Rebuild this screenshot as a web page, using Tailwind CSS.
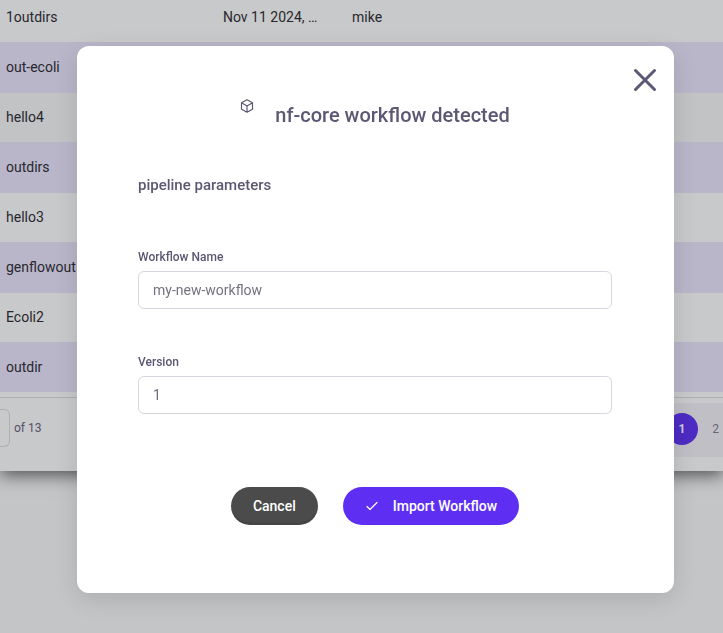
<!DOCTYPE html>
<html lang="en">
<head>
<meta charset="utf-8">
<title>Import workflow</title>
<script src="https://cdn.jsdelivr.net/npm/@tailwindcss/browser@4"></script>
</head>
<body class="min-h-screen overflow-hidden bg-[#c4c5c7] font-[Roboto,sans-serif] text-sm text-[#28272e]">
<main class="-mt-2 bg-[#c8c9ca] shadow-[0_4px_16px_rgba(0,0,0,0.6)]">
  <table class="w-full table-fixed border-collapse text-left">
    <colgroup><col class="w-[217px]"><col class="w-[129px]"><col></colgroup>
    <tbody>
      <tr class="h-[50px]"><td class="px-1.5">1outdirs</td><td class="px-1.5">Nov 11 2024, …</td><td class="px-1.5">mike</td></tr>
      <tr class="h-[51px] bg-[#b9b6ca]"><td class="px-1.5 pb-0.5">out-ecoli</td><td></td><td></td></tr>
      <tr class="h-[49px] bg-[#c1c3c4]"><td class="px-1.5 pb-0.5">hello4</td><td></td><td></td></tr>
      <tr class="h-[51px] bg-[#b9b6ca]"><td class="px-1.5 pb-0.5">outdirs</td><td></td><td></td></tr>
      <tr class="h-[49px]"><td class="px-1.5 pb-0.5">hello3</td><td></td><td></td></tr>
      <tr class="h-[51px] bg-[#b9b6ca]"><td class="px-1.5 pb-0.5">genflowout</td><td></td><td></td></tr>
      <tr class="h-[49px]"><td class="px-1.5 pb-0.5">Ecoli2</td><td></td><td></td></tr>
      <tr class="h-[50px] bg-[#b9b6ca]"><td class="px-1.5">outdir</td><td></td><td></td></tr>
    </tbody>
  </table>
  <footer class="mt-[5px] flex items-start justify-between border-t border-[#aeafb2] pt-[5px] pb-3.5 text-xs text-[#55506b]">
    <div class="flex items-center pt-1.5">
      <input aria-label="Rows per page" class="h-[38px] w-2.5 rounded-r-md border border-l-0 border-[#aeaeb5]">
      <span class="ml-1 leading-4">of 13</span>
    </div>
    <nav aria-label="Pages" class="flex h-[54px] w-[110px] items-center justify-end bg-[#c1bfc6] pb-0.5">
      <button class="size-8 rounded-full bg-[#4e2bc4] font-bold text-[#d0cce0]">1</button>
      <button class="ml-2.5 w-[15px] text-center text-[#68656f]">2</button>
    </nav>
  </footer>
</main>

<div class="fixed inset-0 pt-[46px] pr-[49px] pl-[77px]">
  <section role="dialog" aria-modal="true" aria-labelledby="title" class="relative rounded-xl bg-white pt-[54px] pr-[62px] pb-[68px] pl-[61px] text-[#5c5772] shadow-[0_6px_24px_rgba(0,0,0,0.12)]">
    <button aria-label="Close" class="absolute top-[22px] right-[17px]">
      <svg class="size-6" viewBox="0 0 24 24" fill="none" stroke="currentColor" stroke-width="3" stroke-linecap="round"><path d="M2.5 2.5l19 19M21.5 2.5l-19 19"/></svg>
    </button>
    <header class="flex h-[30px] justify-center gap-[21px]">
      <svg class="-mt-px size-3.5" viewBox="0 0 14 14" fill="none" stroke="currentColor" stroke-width="1.2" stroke-linejoin="round" stroke-linecap="round"><path d="M7 .8L12.5 3.8v6.4L7 13.2 1.5 10.2V3.8zM1.5 3.8L7 6.9l5.5-3.1M7 6.9v6.3"/></svg>
      <h1 id="title" class="text-xl leading-[30px] font-medium">nf-core workflow detected</h1>
    </header>
    <h2 class="mt-11 text-[15px] leading-[22px] font-medium">pipeline parameters</h2>
    <form>
      <div class="mt-[53px]">
        <label for="name" class="block text-xs leading-4 font-medium">Workflow Name</label>
        <input id="name" placeholder="my-new-workflow" class="mt-1.5 h-[38px] w-full rounded-md border border-[#d8d6de] px-3.5 text-sm placeholder:text-[#75727f]">
      </div>
      <div class="mt-[45px]">
        <label for="version" class="block text-xs leading-4 font-medium">Version</label>
        <input id="version" value="1" class="mt-1.5 h-[38px] w-full rounded-md border border-[#d8d6de] px-3.5 text-sm text-[#6e6b7b]">
      </div>
      <div class="mt-[73px] flex justify-center gap-[25px] text-sm font-medium text-white">
        <button type="button" class="h-[38px] rounded-full bg-[#4b4b4b] px-[22px] shadow-[inset_0_-3px_0_rgba(0,0,0,0.07)]">Cancel</button>
        <button type="submit" class="flex h-[38px] items-center rounded-full bg-[#5e2ff3] px-[22px]">
          <svg class="mr-3.5 size-3.5" viewBox="0 0 14 14" fill="none" stroke="currentColor" stroke-width="1.2" stroke-linecap="round" stroke-linejoin="round"><path d="M2 7.5l3 3L12 3.5"/></svg>
          Import Workflow
        </button>
      </div>
    </form>
  </section>
</div>
</body>
</html>
